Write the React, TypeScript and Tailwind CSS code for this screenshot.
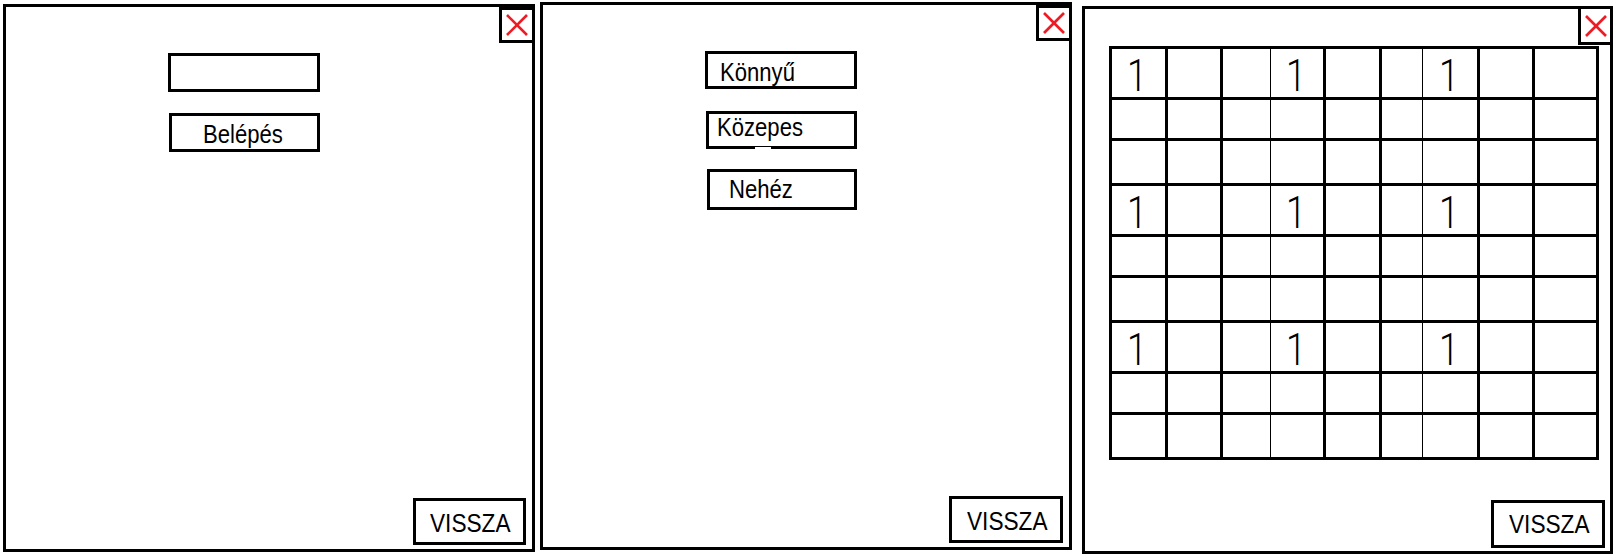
import React from "react";

const font = "font-['Liberation_Sans',Arial,sans-serif]";

function CloseBox({ className }: { className: string }) {
    return (
        <div className={`absolute flex items-center justify-center border-[3px] border-black bg-white ${className}`}>
            <svg viewBox="0 0 22 22" className="w-[22px] h-[22px]">
                <line x1="1" y1="1" x2="21" y2="21" stroke="#ed1c24" strokeWidth="2.6" />
                <line x1="21" y1="1" x2="1" y2="21" stroke="#ed1c24" strokeWidth="2.6" />
            </svg>
        </div>
    );
}

function Label({ text, left, narrow = "scale-x-[0.85]" }: { text: string; left?: boolean; narrow?: string }) {
    return (
        <span
            className={`inline-block text-[26px] leading-none text-black whitespace-nowrap ${narrow} ${
                left ? "origin-left" : "origin-center"
            }`}
        >
            {text}
        </span>
    );
}

function BackButton({ className }: { className: string }) {
    return (
        <button
            type="button"
            className={`mt-auto self-end flex items-center justify-center border-[3px] border-black bg-white ${className}`}
        >
            <Label text="VISSZA" narrow="scale-x-[0.87]" />
        </button>
    );
}

const cols = [53, 52, 47, 50, 53, 40, 52, 52, 61];
const ones = [0, 3, 6];

function Board() {
    const cells = [];
    for (let r = 0; r < 9; r++) {
        for (let c = 0; c < cols.length; c++) {
            // a 3|4 és 6|7 oszlop közti vonal vékony
            const thin = c === 3 || c === 6;
            const hasOne = ones.includes(r) && ones.includes(c);
            cells.push(
                <div
                    key={`${r}-${c}`}
                    className={`bg-white flex items-center justify-center ${thin ? "-ml-[2px]" : ""}`}
                >
                    {hasOne && (
                        <span className="font-['Roboto',sans-serif] font-light text-[45px] leading-none pt-[5px] pr-[4px] text-black scale-x-[0.8]">
                            1
                        </span>
                    )}
                </div>
            );
        }
    }
    return (
        <div className="ml-[24px] mt-[37px] self-start grid bg-black p-[3px] gap-[3px] grid-cols-[53px_52px_47px_50px_53px_40px_52px_52px_61px] grid-rows-[48px_38px_42px_48px_38px_42px_48px_38px_42px]">
            {cells}
        </div>
    );
}

export default function App() {
    return (
        <div className={`w-[1620px] h-[560px] bg-white flex items-start pl-[3px] ${font}`}>
            {/* Belépés */}
            <div className="relative mt-[4px] w-[532px] h-[548px] border-[3px] border-black flex flex-col">
                <CloseBox className="top-0 -right-[3px] w-[36px] h-[36px]" />
                <input
                    className="ml-[162px] mt-[46px] w-[152px] h-[39px] border-[3px] border-black outline-none bg-white"
                    type="text"
                />
                <button
                    type="button"
                    className="ml-[163px] mt-[21px] w-[151px] h-[39px] border-[3px] border-black flex items-center justify-center pt-[2px] pr-[3px]"
                >
                    <Label text="Belépés" />
                </button>
                <BackButton className="mr-[6px] mb-[4px] w-[113px] h-[47px] pt-[2px] pl-[2px]" />
            </div>

            {/* Nehézség */}
            <div className="relative ml-[5px] mt-[2px] w-[532px] h-[548px] border-[3px] border-black flex flex-col">
                <CloseBox className="top-0 -right-[3px] w-[36px] h-[36px]" />
                <button
                    type="button"
                    className="ml-[162px] mt-[46px] w-[152px] h-[38px] border-[3px] border-black flex items-center pl-[12px] pt-[4px]"
                >
                    <Label text="Könnyű" left />
                </button>
                <button
                    type="button"
                    className="relative ml-[163px] mt-[22px] w-[151px] h-[38px] border-[3px] border-black flex items-center pl-[8px] pb-[7px]"
                >
                    <Label text="Közepes" left />
                    <span className="absolute -bottom-[3px] left-[46px] w-[16px] h-[2px] bg-white" />
                </button>
                <button
                    type="button"
                    className="ml-[164px] mt-[20px] w-[150px] h-[41px] border-[3px] border-black flex items-center pl-[19px] pb-[1px]"
                >
                    <Label text="Nehéz" left />
                </button>
                <BackButton className="mr-[6px] mb-[4px] w-[114px] h-[47px] pt-[2px] pl-[2px]" />
            </div>

            {/* Játéktábla */}
            <div className="relative ml-[10px] mt-[6px] w-[531px] h-[548px] border-[3px] border-black flex flex-col">
                <CloseBox className="-top-[3px] -right-[3px] w-[35px] h-[39px]" />
                <Board />
                <BackButton className="mr-[5px] mb-[3px] w-[114px] h-[48px] pl-[2px]" />
            </div>
        </div>
    );
}
